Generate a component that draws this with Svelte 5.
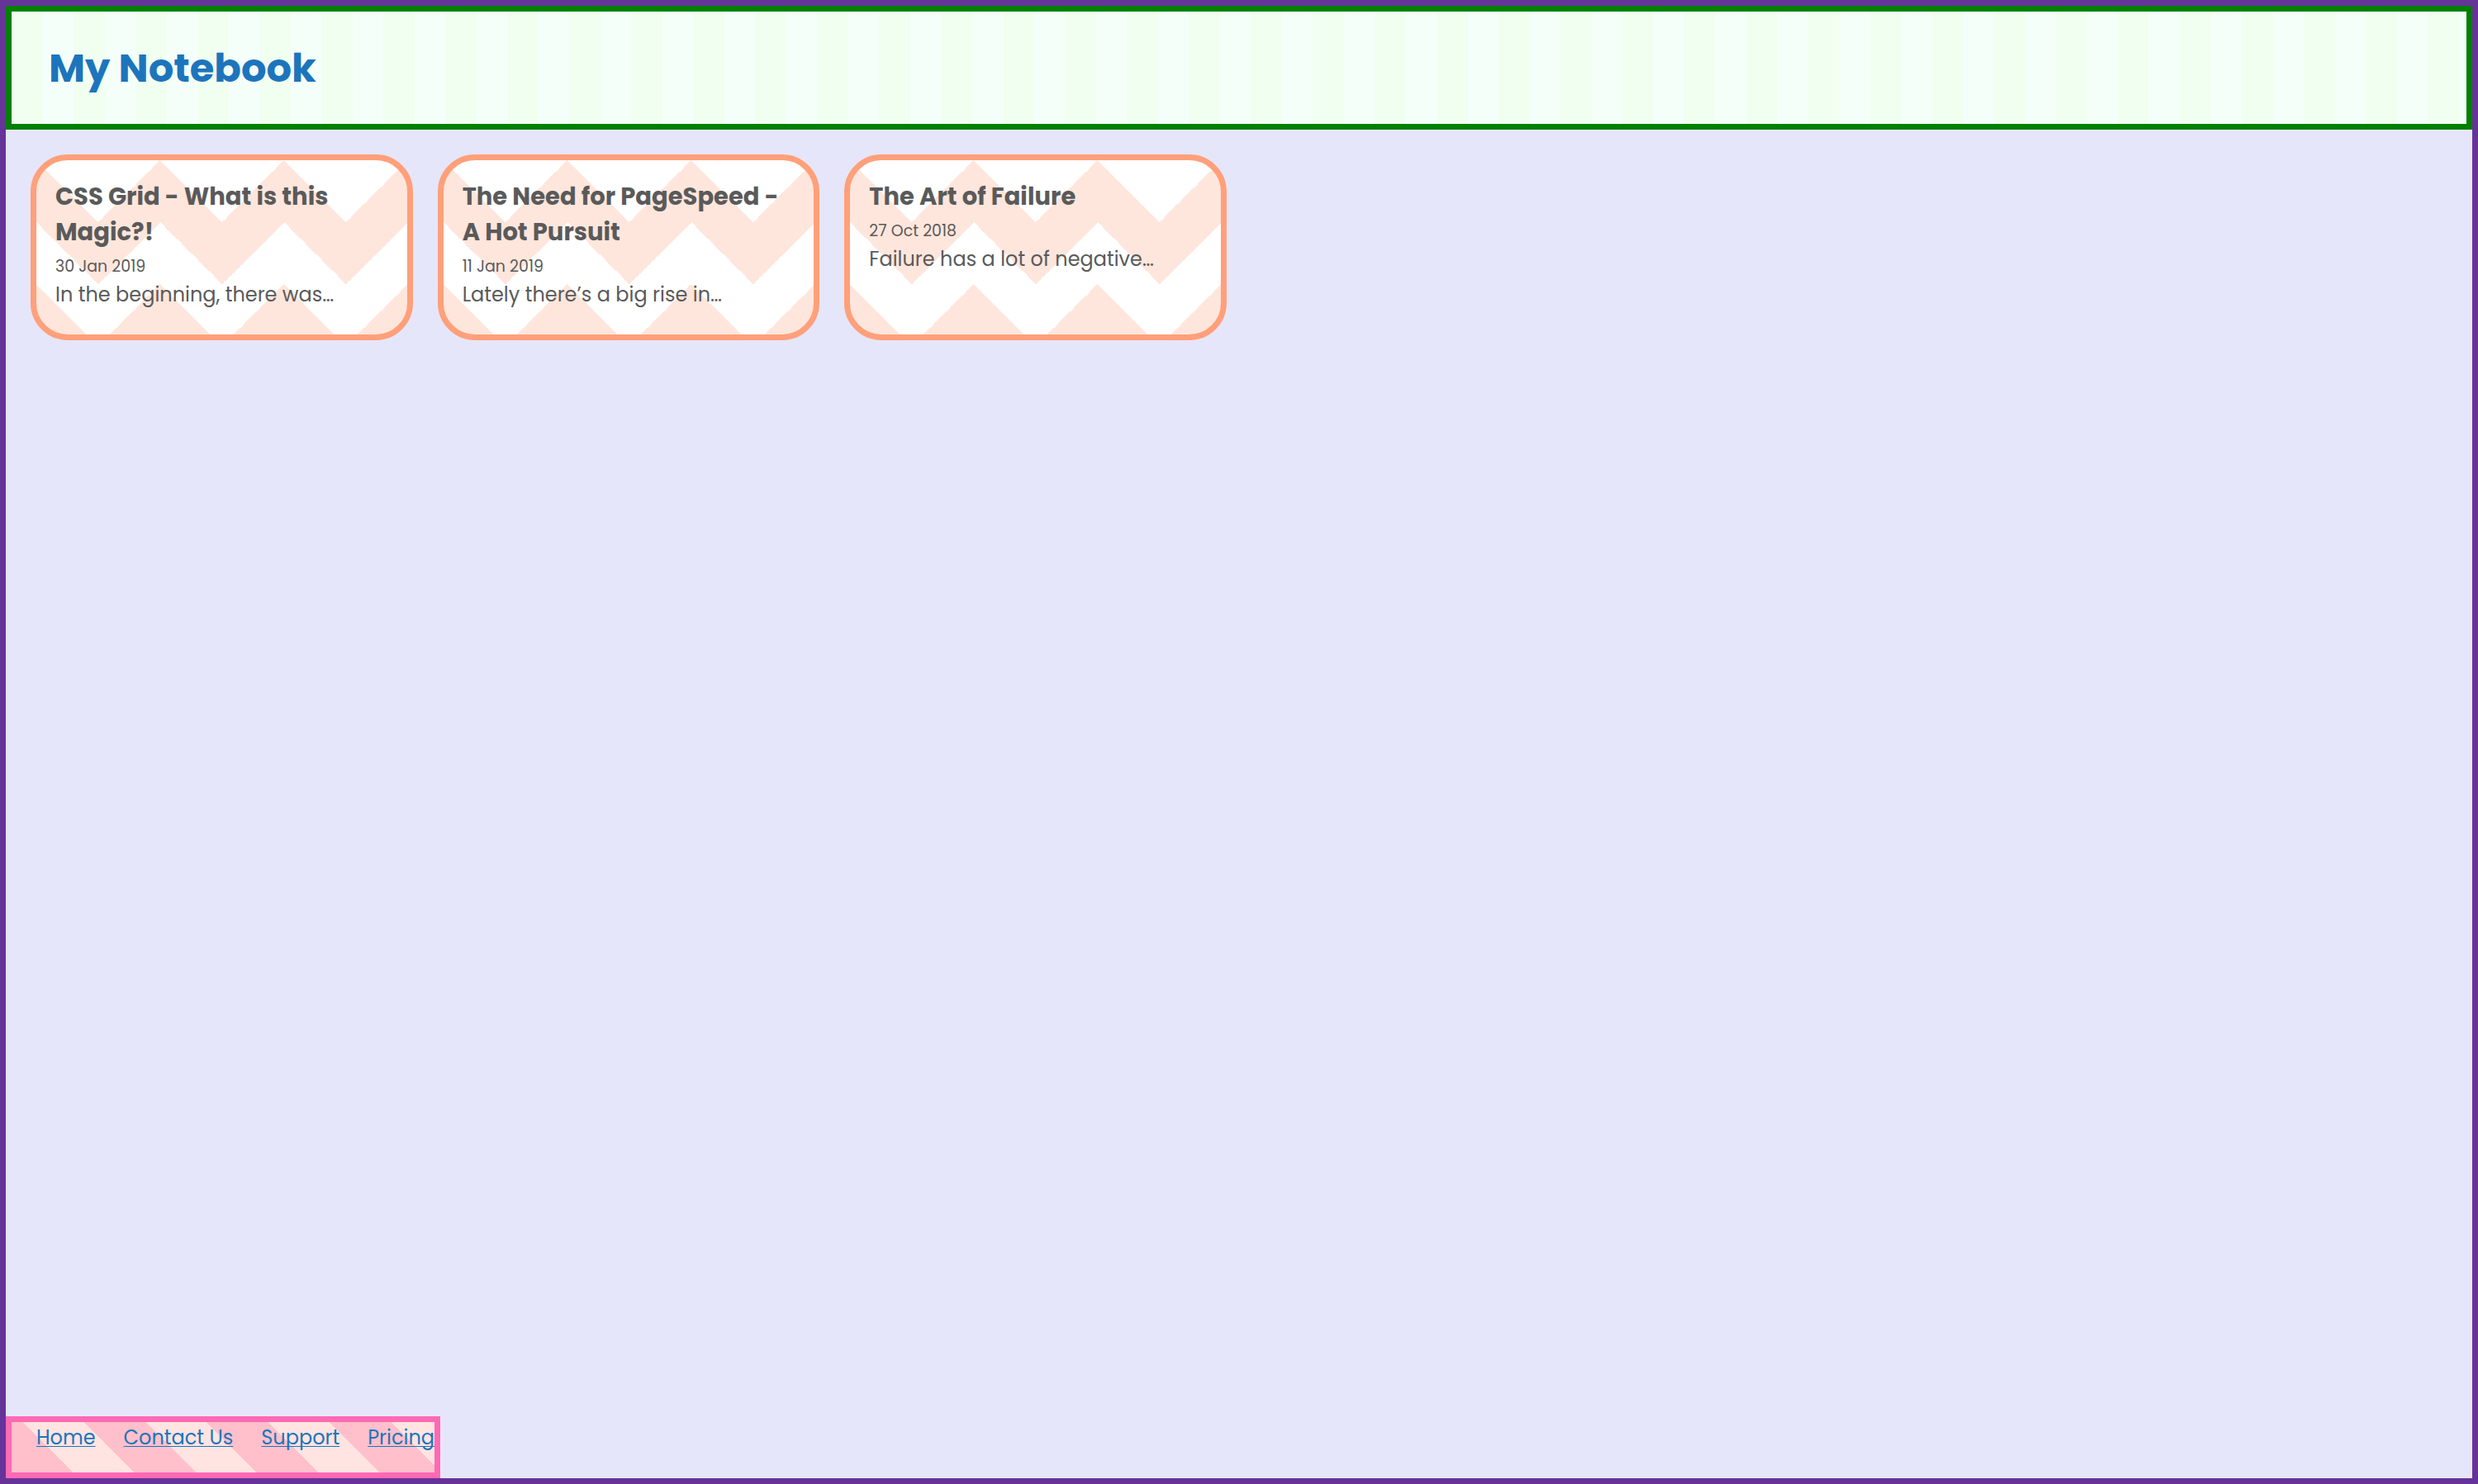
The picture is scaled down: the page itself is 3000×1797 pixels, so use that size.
<script>
  const posts = [
    { title: 'CSS Grid - What is this Magic?!', iso: '2019-01-30', date: '30 Jan 2019', excerpt: 'In the beginning, there was…' },
    { title: 'The Need for PageSpeed - A Hot Pursuit', iso: '2019-01-11', date: '11 Jan 2019', excerpt: 'Lately there’s a big rise in…' },
    { title: 'The Art of Failure', iso: '2018-10-27', date: '27 Oct 2018', excerpt: 'Failure has a lot of negative…' }
  ];
  const links = ['Home', 'Contact Us', 'Support', 'Pricing'];
</script>

<div class="page">
  <header class="masthead">
    <h1>My Notebook</h1>
  </header>

  <main class="posts">
    {#each posts as post}
      <article class="card">
        <h2>{post.title}</h2>
        <p><time datetime={post.iso}>{post.date}</time></p>
        <p>{post.excerpt}</p>
      </article>
    {/each}
  </main>

  <footer class="footer">
    <nav aria-label="Footer">
      <ul>
        {#each links as link}
          <li><a href="#{link.toLowerCase().replace(' ', '-')}">{link}</a></li>
        {/each}
      </ul>
    </nav>
  </footer>
</div>

<style>
  :global(body) {
    margin: 0;
  }

  .page {
    box-sizing: border-box;
    min-height: 100vh;
    display: flex;
    flex-direction: column;
    border: 7px solid rebeccapurple;
    background: lavender;
    color: #5a5a5a;
    font-family: Poppins, Inter, "Open Sans", sans-serif;
    font-size: 24px;
    line-height: 36px;
  }

  .masthead {
    padding: 33px 45px 31px;
    border: 7px solid green;
    background: repeating-linear-gradient(90deg, honeydew 0 38px, mintcream 38px 75px);
  }

  h1 {
    margin: 0;
    color: #1c75bc;
    font-size: 48px;
    line-height: 72px;
    font-weight: 700;
  }

  .posts {
    flex: 1;
    display: grid;
    grid-template-columns: repeat(auto-fill, minmax(min(450px, 100%), 1fr));
    align-content: start;
    gap: 30px;
    padding: 30px;
  }

  .card {
    --band: #ffe6dc;
    padding: 23px 23px 30px;
    border: 7px solid lightsalmon;
    border-radius: 45px;
    background:
      linear-gradient(135deg, var(--band) 25%, transparent 25%) -75px -75px / 150px 150px,
      linear-gradient(225deg, var(--band) 25%, transparent 25%) -75px -75px / 150px 150px,
      linear-gradient(315deg, var(--band) 25%, transparent 25%) 0 -75px / 150px 150px,
      linear-gradient(45deg, var(--band) 25%, transparent 25%) 0 -75px / 150px 150px,
      white;
  }

  h2 {
    margin: 0;
    font-size: 29px;
    line-height: 43px;
    font-weight: 700;
  }

  time {
    font-size: 19px;
    line-height: 24px;
  }

  p {
    margin: 0;
  }

  .footer {
    align-self: flex-start;
    padding: 1px 0 24px 30px;
    border: 7px solid hotpink;
    background: repeating-linear-gradient(45deg, pink 0 53px, mistyrose 53px 105px);
  }

  ul {
    display: flex;
    flex-wrap: wrap;
    gap: 0 34px;
    margin: 0;
    padding: 0;
    list-style: none;
  }

  a {
    color: #1c75bc;
    text-decoration: underline;
    text-decoration-thickness: 1px;
    text-underline-offset: 2px;
    text-decoration-skip-ink: none;
  }
</style>
